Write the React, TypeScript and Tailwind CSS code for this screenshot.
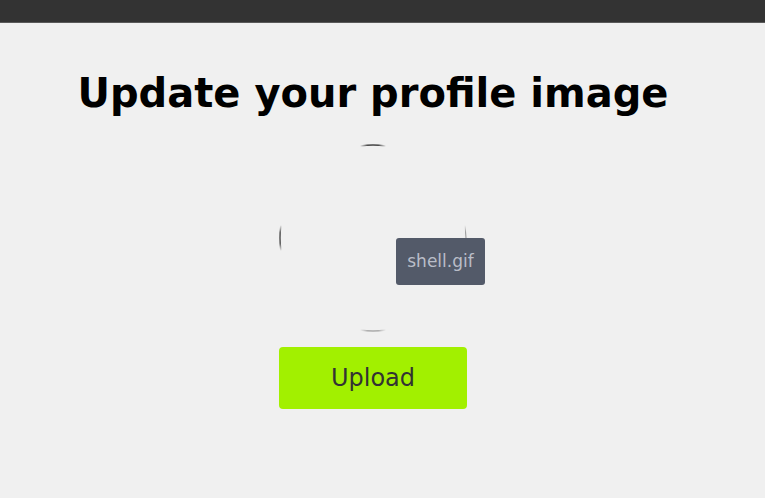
import React from "react";

function Ring() {
  const c = 94;
  const r = 93;
  const arc = (a0: number, a1: number) => {
    const rad = (d: number) => (d * Math.PI) / 180;
    const x0 = c + r * Math.cos(rad(a0));
    const y0 = c + r * Math.sin(rad(a0));
    const x1 = c + r * Math.cos(rad(a1));
    const y1 = c + r * Math.sin(rad(a1));
    return `M ${x0} ${y0} A ${r} ${r} 0 0 1 ${x1} ${y1}`;
  };
  return (
    <svg width="188" height="188" viewBox="0 0 188 188" className="absolute inset-0">
      <defs>
        <linearGradient id="gh" x1="0" x2="1" y1="0" y2="0">
          <stop offset="0" stopColor="#444" stopOpacity="0" />
          <stop offset="0.3" stopColor="#444" stopOpacity="1" />
          <stop offset="0.7" stopColor="#444" stopOpacity="1" />
          <stop offset="1" stopColor="#444" stopOpacity="0" />
        </linearGradient>
        <linearGradient id="gv" x1="0" x2="0" y1="0" y2="1">
          <stop offset="0" stopColor="#555" stopOpacity="0" />
          <stop offset="0.3" stopColor="#555" stopOpacity="1" />
          <stop offset="0.7" stopColor="#555" stopOpacity="1" />
          <stop offset="1" stopColor="#555" stopOpacity="0" />
        </linearGradient>
      </defs>
      <path d={arc(-98, -82)} stroke="url(#gh)" strokeWidth="1.5" fill="none" />
      <path d={arc(82, 98)} stroke="url(#gh)" strokeWidth="1.5" fill="none" opacity="0.4" />
      <path d={arc(172, 188)} stroke="url(#gv)" strokeWidth="1.5" fill="none" />
      <path d={arc(-8, 8)} stroke="url(#gv)" strokeWidth="1" fill="none" opacity="0.6" />
    </svg>
  );
}

export default function App() {
  return (
    <div className="min-h-[498px] w-[765px] bg-[#f0f0f0] font-['DejaVu_Sans',sans-serif]">
      <div className="h-[23px] bg-[#333333] border-b border-[#5a5a5a]" />
      <div className="w-[746px] flex flex-col items-center pt-[47px]">
        <h1 className="text-[40px] leading-[47px] font-bold text-black">Update your profile image</h1>
        <div className="relative mt-[27px] w-[188px] h-[188px]">
          <Ring />
          <div className="absolute left-[117px] top-[94px] w-[89px] h-[47px] rounded-[3px] bg-[#535a69] flex items-center justify-center text-[17px] text-[#b9bdc8]">
            shell.gif
          </div>
        </div>
        <button className="mt-[15px] w-[188px] h-[62px] rounded-[4px] bg-[#a2f000] text-[24px] text-[#333333]">
          Upload
        </button>
      </div>
    </div>
  );
}
